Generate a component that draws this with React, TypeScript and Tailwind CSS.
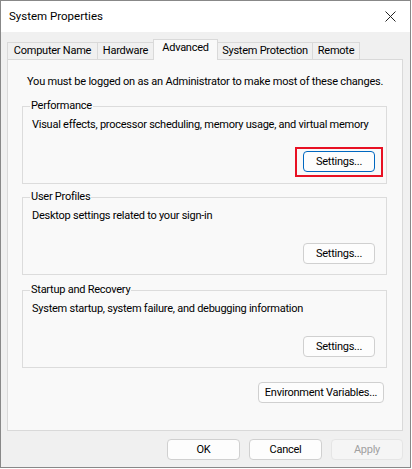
import React from 'react';

const font = { fontFamily: '"Segoe UI", Roboto, "Liberation Sans", sans-serif' };

const Button = ({ label, className = '', disabled = false, focused = false }: { label: string; className?: string; disabled?: boolean; focused?: boolean }) => (
  <button
    className={
      'h-[21px] whitespace-nowrap rounded-[4px] border text-[11px] leading-none tracking-[-0.25px] ' +
      (disabled
        ? 'border-[#e5e5e5] bg-[#f5f5f5] text-[#a0a0a0] '
        : focused
        ? 'border-[#0067c0] bg-[#fdfdfd] text-black '
        : 'border-[#d0d0d0] bg-[#fdfdfd] text-black ') +
      className
    }
  >
    {label}
  </button>
);

const Group = ({ title, desc, children, className = '' }: { title: string; desc: string; children: React.ReactNode; className?: string }) => (
  <fieldset className={'min-w-0 border border-[#dcdcdc] pl-[9px] pr-[11px] ' + className}>
    <legend className="-ml-[2px] px-[1px] text-[11px] leading-[16px] tracking-[-0.25px]">{title}</legend>
    <div className="mt-[3px] whitespace-nowrap text-[11px] leading-[16px] tracking-[-0.25px]">{desc}</div>
    {children}
  </fieldset>
);

export default function App() {
  const tabs = [
    { label: 'Computer Name', w: 'w-[91px]' },
    { label: 'Hardware', w: 'w-[57px]' },
    { label: 'Advanced', w: 'w-[65px]', active: true },
    { label: 'System Protection', w: 'w-[96px]' },
    { label: 'Remote', w: 'w-[48px]' },
  ];

  return (
    <div style={font} className="flex h-[468px] w-[411px] flex-col border border-[#888888] bg-[#f0f0f0] text-black">
      {/* title bar */}
      <div className="flex h-[31px] items-center justify-between bg-white pl-[8px] pr-[9px]">
        <span className="text-[11.5px]">System Properties</span>
        <svg width="11" height="11" viewBox="0 0 11 11" className="mr-[5px]">
          <path d="M0.5 0.5L10.5 10.5M10.5 0.5L0.5 10.5" stroke="#222" strokeWidth="1" />
        </svg>
      </div>

      <div className="flex flex-1 flex-col px-[6px] pt-[7px]">
        {/* tabs */}
        <div className="flex items-end">
          {tabs.map((t, i) => (
            <div
              key={t.label}
              className={
                t.w +
                ' flex items-center justify-center whitespace-nowrap border border-b-0 border-[#d9d9d9] text-[11px] tracking-[-0.25px] ' +
                (i > 0 ? '-ml-px ' : '') +
                (t.active ? 'relative z-10 -mb-px h-[21px] bg-[#f9f9f9] pb-[3px]' : 'h-[17px] bg-[#f0f0f0]')
              }
            >
              {t.label}
            </div>
          ))}
        </div>

        {/* panel */}
        <div className="flex h-[372px] w-[396px] flex-col border border-[#d9d9d9] bg-[#f9f9f9] pl-[14px] pr-[15px] pt-[14px]">
          <div className="whitespace-nowrap pl-[5px] text-[11px] leading-[16px] tracking-[-0.2px]">
            You must be logged on as an Administrator to make most of these changes.
          </div>

          <Group title="Performance" desc="Visual effects, processor scheduling, memory usage, and virtual memory" className="mt-[8px] pb-[6px]">
            <div className="mt-[14px] flex justify-end">
              <div className="-mr-[8px] border-2 border-[#e81123] px-[6px] pb-[3px] pt-[2px]">
                <Button label="Settings..." focused className="block w-[72px]" />
              </div>
            </div>
          </Group>

          <Group title="User Profiles" desc="Desktop settings related to your sign-in" className="mt-[5px] pb-[10px]">
            <div className="mt-[19px] flex justify-end">
              <Button label="Settings..." className="w-[72px]" />
            </div>
          </Group>

          <Group title="Startup and Recovery" desc="System startup, system failure, and debugging information" className="mt-[7px] pb-[10px]">
            <div className="mt-[19px] flex justify-end">
              <Button label="Settings..." className="w-[72px]" />
            </div>
          </Group>

          <div className="mt-[14px] flex justify-end pr-[3px]">
            <Button label="Environment Variables..." className="w-[126px]" />
          </div>
        </div>

        {/* footer buttons */}
        <div className="mt-[8px] flex justify-end gap-[9px] pr-[1px]">
          <Button label="OK" className="w-[73px]" />
          <Button label="Cancel" className="w-[73px]" />
          <Button label="Apply" disabled className="w-[72px]" />
        </div>
      </div>
    </div>
  );
}
